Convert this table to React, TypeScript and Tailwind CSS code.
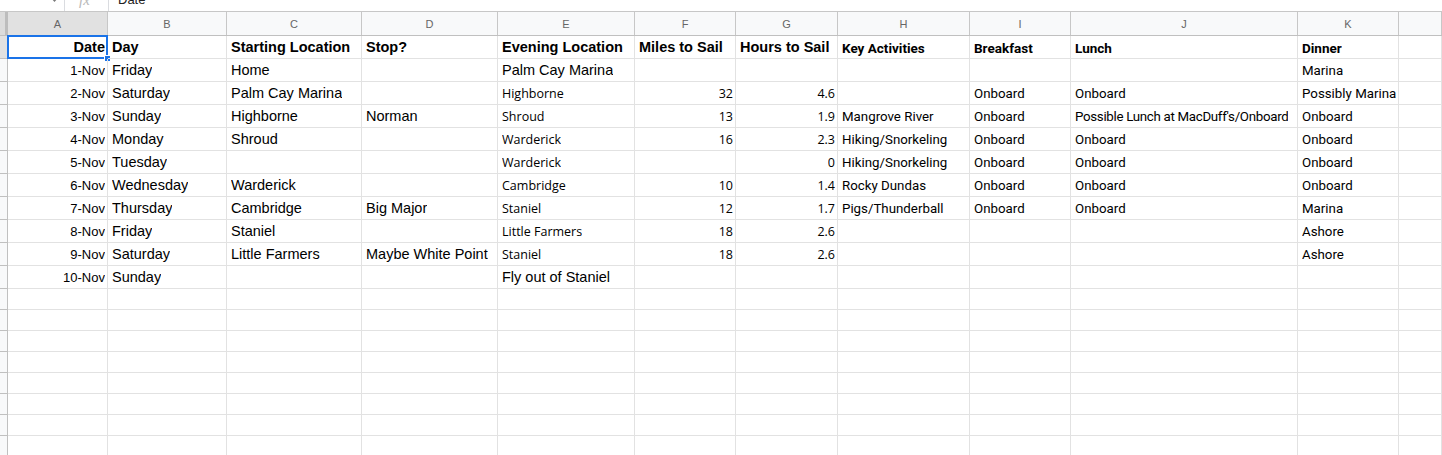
import React from "react";

type F = "a" | "ab" | "d" | "db" | "c" | "r" | "rb";
type Cell = { t: string; f: F; right?: boolean; x?: string };

const widths = [100, 119, 135, 136, 137, 101, 102, 132, 101, 227, 101, 43];
const letters = ["A", "B", "C", "D", "E", "F", "G", "H", "I", "J", "K", ""];

const fontClass: Record<F, string> = {
  a: "font-['Liberation_Sans',Arial,sans-serif] text-[14.5px]",
  ab: "font-['Liberation_Sans',Arial,sans-serif] text-[14.5px] font-bold",
  d: "font-['Liberation_Sans',Arial,sans-serif] text-[13px]",
  db: "font-['Liberation_Sans',Arial,sans-serif] text-[14.5px] font-bold",
  c: "font-['Open_Sans',sans-serif] text-[12.5px]",
  r: "font-['Roboto',sans-serif] text-[13.3px]",
  rb: "font-['Roboto',sans-serif] text-[13.5px] font-bold",
};

const e = (): Cell => ({ t: "", f: "a" });
const a = (t: string): Cell => ({ t, f: "a" });
const c = (t: string): Cell => ({ t, f: "c" });
const n = (t: string): Cell => ({ t, f: "c", right: true });
const r = (t: string): Cell => ({ t, f: "r" });
const d = (t: string): Cell => ({ t, f: "d", right: true });

const rows: Cell[][] = [
  [
    { t: "Date", f: "db", right: true },
    { t: "Day", f: "ab" },
    { t: "Starting Location", f: "ab" },
    { t: "Stop?", f: "ab" },
    { t: "Evening Location", f: "ab" },
    { t: "Miles to Sail", f: "ab" },
    { t: "Hours to Sail", f: "ab" },
    { t: "Key Activities", f: "rb" },
    { t: "Breakfast", f: "rb" },
    { t: "Lunch", f: "rb" },
    { t: "Dinner", f: "rb" },
    e(),
  ],
  [d("1-Nov"), a("Friday"), a("Home"), e(), a("Palm Cay Marina"), e(), e(), e(), e(), e(), r("Marina"), e()],
  [d("2-Nov"), a("Saturday"), a("Palm Cay Marina"), e(), c("Highborne"), n("32"), n("4.6"), e(), r("Onboard"), r("Onboard"), r("Possibly Marina"), e()],
  [
    d("3-Nov"),
    a("Sunday"),
    a("Highborne"),
    a("Norman"),
    c("Shroud"),
    n("13"),
    n("1.9"),
    r("Mangrove River"),
    r("Onboard"),
    { t: "Possible Lunch at MacDuff's/Onboard", f: "r", x: "tracking-[-0.3px]" },
    r("Onboard"),
    e(),
  ],
  [d("4-Nov"), a("Monday"), a("Shroud"), e(), c("Warderick"), n("16"), n("2.3"), r("Hiking/Snorkeling"), r("Onboard"), r("Onboard"), r("Onboard"), e()],
  [d("5-Nov"), a("Tuesday"), e(), e(), c("Warderick"), e(), n("0"), r("Hiking/Snorkeling"), r("Onboard"), r("Onboard"), r("Onboard"), e()],
  [d("6-Nov"), a("Wednesday"), a("Warderick"), e(), c("Cambridge"), n("10"), n("1.4"), r("Rocky Dundas"), r("Onboard"), r("Onboard"), r("Onboard"), e()],
  [d("7-Nov"), a("Thursday"), a("Cambridge"), a("Big Major"), c("Staniel"), n("12"), n("1.7"), r("Pigs/Thunderball"), r("Onboard"), r("Onboard"), r("Marina"), e()],
  [d("8-Nov"), a("Friday"), a("Staniel"), e(), c("Little Farmers"), n("18"), n("2.6"), e(), e(), e(), r("Ashore"), e()],
  [d("9-Nov"), a("Saturday"), a("Little Farmers"), a("Maybe White Point"), c("Staniel"), n("18"), n("2.6"), e(), e(), e(), r("Ashore"), e()],
  [d("10-Nov"), a("Sunday"), e(), e(), a("Fly out of Staniel"), e(), e(), e(), e(), e(), e(), e()],
];

export default function App() {
  return (
    <div className="w-[1442px] h-[455px] overflow-hidden bg-white text-black">
      {/* formula bar (scrolled, partially visible) */}
      <div className="h-[12px] border-b border-[#c7c7c7] overflow-hidden">
        <div className="flex items-center h-[22px] -mt-[11px] font-['Liberation_Sans',Arial,sans-serif]">
          <div className="w-[64px] flex justify-end pr-[6px]">
            <svg width="7" height="4" viewBox="0 0 7 4">
              <path d="M0 0 L7 0 L3.5 4 Z" fill="#7a7a7a" />
            </svg>
          </div>
          <div className="w-px h-full bg-[#dadce0]" />
          <div className="w-[43px] pl-[14px] text-[15px] italic text-[#b8b8b8] font-['Liberation_Serif',serif]">fx</div>
          <div className="w-px h-full bg-[#dadce0]" />
          <div className="pl-[9px] text-[13px] text-[#222]">Date</div>
        </div>
      </div>

      {/* column headers */}
      <div className="flex h-[24px] bg-[#f8f9fa] border-b border-[#c0c0c0]">
        <div className="w-[8px] shrink-0 flex">
          <div className="w-[5px] bg-[#dcdcdc]" />
          <div className="w-[3px] bg-[#bdbdbd]" />
        </div>
        {widths.map((w, i) => (
          <div
            key={i}
            style={{ width: w }}
            className={`shrink-0 flex items-center justify-center pt-[1px] border-r border-[#c7c7c7] text-[11px] text-[#666] font-['Liberation_Sans',Arial,sans-serif] ${
              i === 0 ? "bg-[#e1e1e1]" : ""
            }`}
          >
            {letters[i]}
          </div>
        ))}
      </div>

      {/* data rows */}
      {rows.map((row, ri) => (
        <div key={ri} className="flex h-[23px]">
          <div
            className={`w-[8px] shrink-0 border-r border-b border-[#c0c0c0] ${
              ri === 0 ? "bg-[#e1e1e1]" : "bg-[#f8f9fa]"
            }`}
          />
          {row.map((cell, ci) => (
            <div
              key={ci}
              style={{ width: widths[ci] }}
              className={`relative shrink-0 flex items-center pt-[2px] whitespace-nowrap overflow-visible border-r border-b border-[#e2e2e2] ${
                cell.right ? "justify-end pr-[2px]" : "pl-[4px]"
              } ${fontClass[cell.f]} ${cell.x ?? ""}`}
            >
              <span className="overflow-hidden">{cell.t}</span>
              {ri === 0 && ci === 0 && (
                <>
                  <div className="absolute -left-px -top-px -right-px -bottom-px border-2 border-[#1a73e8] pointer-events-none" />
                  <div className="absolute -right-[4px] -bottom-[4px] w-[7px] h-[7px] bg-[#1a73e8] border border-white" />
                </>
              )}
            </div>
          ))}
        </div>
      ))}

      {/* empty rows */}
      {Array.from({ length: 8 }).map((_, ri) => (
        <div key={ri} className="flex h-[21px]">
          <div className="w-[8px] shrink-0 border-r border-b border-[#c0c0c0] bg-[#f8f9fa]" />
          {widths.map((w, ci) => (
            <div key={ci} style={{ width: w }} className="shrink-0 border-r border-b border-[#e2e2e2]" />
          ))}
        </div>
      ))}
    </div>
  );
}
